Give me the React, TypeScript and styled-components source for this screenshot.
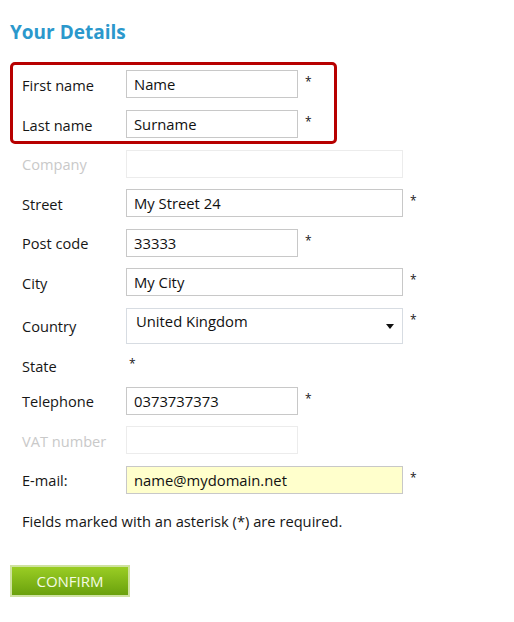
import React from "react";
import styled, { createGlobalStyle } from "styled-components";

const GlobalStyle = createGlobalStyle`
  html, body { margin: 0; padding: 0; background: #ffffff; }
  body { font-family: "Open Sans", "Noto Sans", sans-serif; color: #161616; }
`;

const Page = styled.div`
  padding: 0 10px;
`;

const Title = styled.h2`
  margin: 20px 0 26px;
  font-size: 19px;
  line-height: 24px;
  font-weight: 700;
  color: #2b98cc;
`;

const Form = styled.form`
  display: flex;
  flex-direction: column;
  gap: 11.5px;
  padding-left: 12px;
`;

const Highlight = styled.div`
  display: flex;
  flex-direction: column;
  gap: 12px;
  box-sizing: border-box;
  width: 327px;
  margin: -8px 0 -6px -12px;
  padding: 5px 0 3px 9px;
  border: 3px solid #b70000;
  border-radius: 5px;
`;

const Row = styled.div<{ $tall?: boolean }>`
  display: flex;
  align-items: center;
  min-height: ${(p) => (p.$tall ? "36px" : "28px")};
`;

const StateRow = styled.div`
  display: flex;
  align-items: center;
  height: 20px;
`;

const Label = styled.label<{ $disabled?: boolean }>`
  flex: 0 0 104px;
  font-size: 14.6px;
  line-height: 20px;
  padding-top: 1px;
  color: ${(p) => (p.$disabled ? "#c9c9c9" : "#161616")};
`;

const Input = styled.input<{ $wide?: boolean; $highlight?: boolean }>`
  box-sizing: border-box;
  width: ${(p) => (p.$wide ? "277px" : "172px")};
  height: 28px;
  margin: 0;
  padding: 0 7px;
  border: 1px solid #c8c8c8;
  border-radius: 0;
  background: ${(p) => (p.$highlight ? "#ffffcc" : "#ffffff")};
  font-family: "Open Sans", "Noto Sans", sans-serif;
  font-size: 14.8px;
  color: #111111;
  outline: none;
  &:disabled {
    border-color: #ececec;
    background: #ffffff;
  }
`;

const SelectBox = styled.div`
  box-sizing: border-box;
  width: 277px;
  height: 36px;
  display: flex;
  align-items: center;
  padding: 0 8px 0 9px;
  border: 1px solid #d7dce2;
  background: #ffffff;
`;

const SelectValue = styled.span`
  align-self: flex-start;
  padding-top: 2px;
  font-size: 14.8px;
  line-height: 20px;
  color: #111111;
`;

const Arrow = styled.svg`
  margin-left: auto;
  width: 8px;
  height: 5px;
  margin-top: 2px;
`;

const Req = styled.span<{ $inline?: boolean }>`
  align-self: flex-start;
  margin-left: ${(p) => (p.$inline ? "3px" : "7px")};
  margin-top: ${(p) => (p.$inline ? "2px" : "5px")};
  font-size: 12px;
  line-height: 14px;
  color: #161616;
`;

const Note = styled.p`
  margin: 17px 0 0;
  padding-left: 12px;
  font-size: 14.7px;
  line-height: 20px;
  color: #161616;
`;

const Button = styled.button`
  margin-top: 34px;
  box-sizing: border-box;
  width: 120px;
  height: 32px;
  padding: 0;
  border: 2px solid #cfe2a1;
  background: linear-gradient(#9acd24, #6aa10d);
  color: #f4fbe2;
  font-family: "Open Sans", "Noto Sans", sans-serif;
  font-size: 15px;
  line-height: 26px;
  cursor: pointer;
`;

type FieldProps = {
  label: string;
  value?: string;
  wide?: boolean;
  required?: boolean;
  disabled?: boolean;
  highlight?: boolean;
};

function Field({ label, value, wide, required, disabled, highlight }: FieldProps) {
  return (
    <Row>
      <Label $disabled={disabled}>{label}</Label>
      <Input
        $wide={wide}
        $highlight={highlight}
        disabled={disabled}
        defaultValue={value}
      />
      {required && <Req>*</Req>}
    </Row>
  );
}

export default function App() {
  return (
    <Page>
      <GlobalStyle />
      <Title>Your Details</Title>
      <Form onSubmit={(e) => e.preventDefault()}>
        <Highlight>
          <Field label="First name" value="Name" required />
          <Field label="Last name" value="Surname" required />
        </Highlight>
        <Field label="Company" wide disabled />
        <Field label="Street" value="My Street 24" wide required />
        <Field label="Post code" value="33333" required />
        <Field label="City" value="My City" wide required />
        <Row $tall>
          <Label>Country</Label>
          <SelectBox>
            <SelectValue>United Kingdom</SelectValue>
            <Arrow viewBox="0 0 8 5">
              <path d="M0 0 H8 L4 5 Z" fill="#111" />
            </Arrow>
          </SelectBox>
          <Req>*</Req>
        </Row>
        <StateRow>
          <Label>State</Label>
          <Req $inline>*</Req>
        </StateRow>
        <Field label="Telephone" value="0373737373" required />
        <Field label="VAT number" disabled />
        <Field label="E-mail:" value="name@mydomain.net" wide required highlight />
      </Form>
      <Note>Fields marked with an asterisk (*) are required.</Note>
      <Button type="button">CONFIRM</Button>
    </Page>
  );
}
